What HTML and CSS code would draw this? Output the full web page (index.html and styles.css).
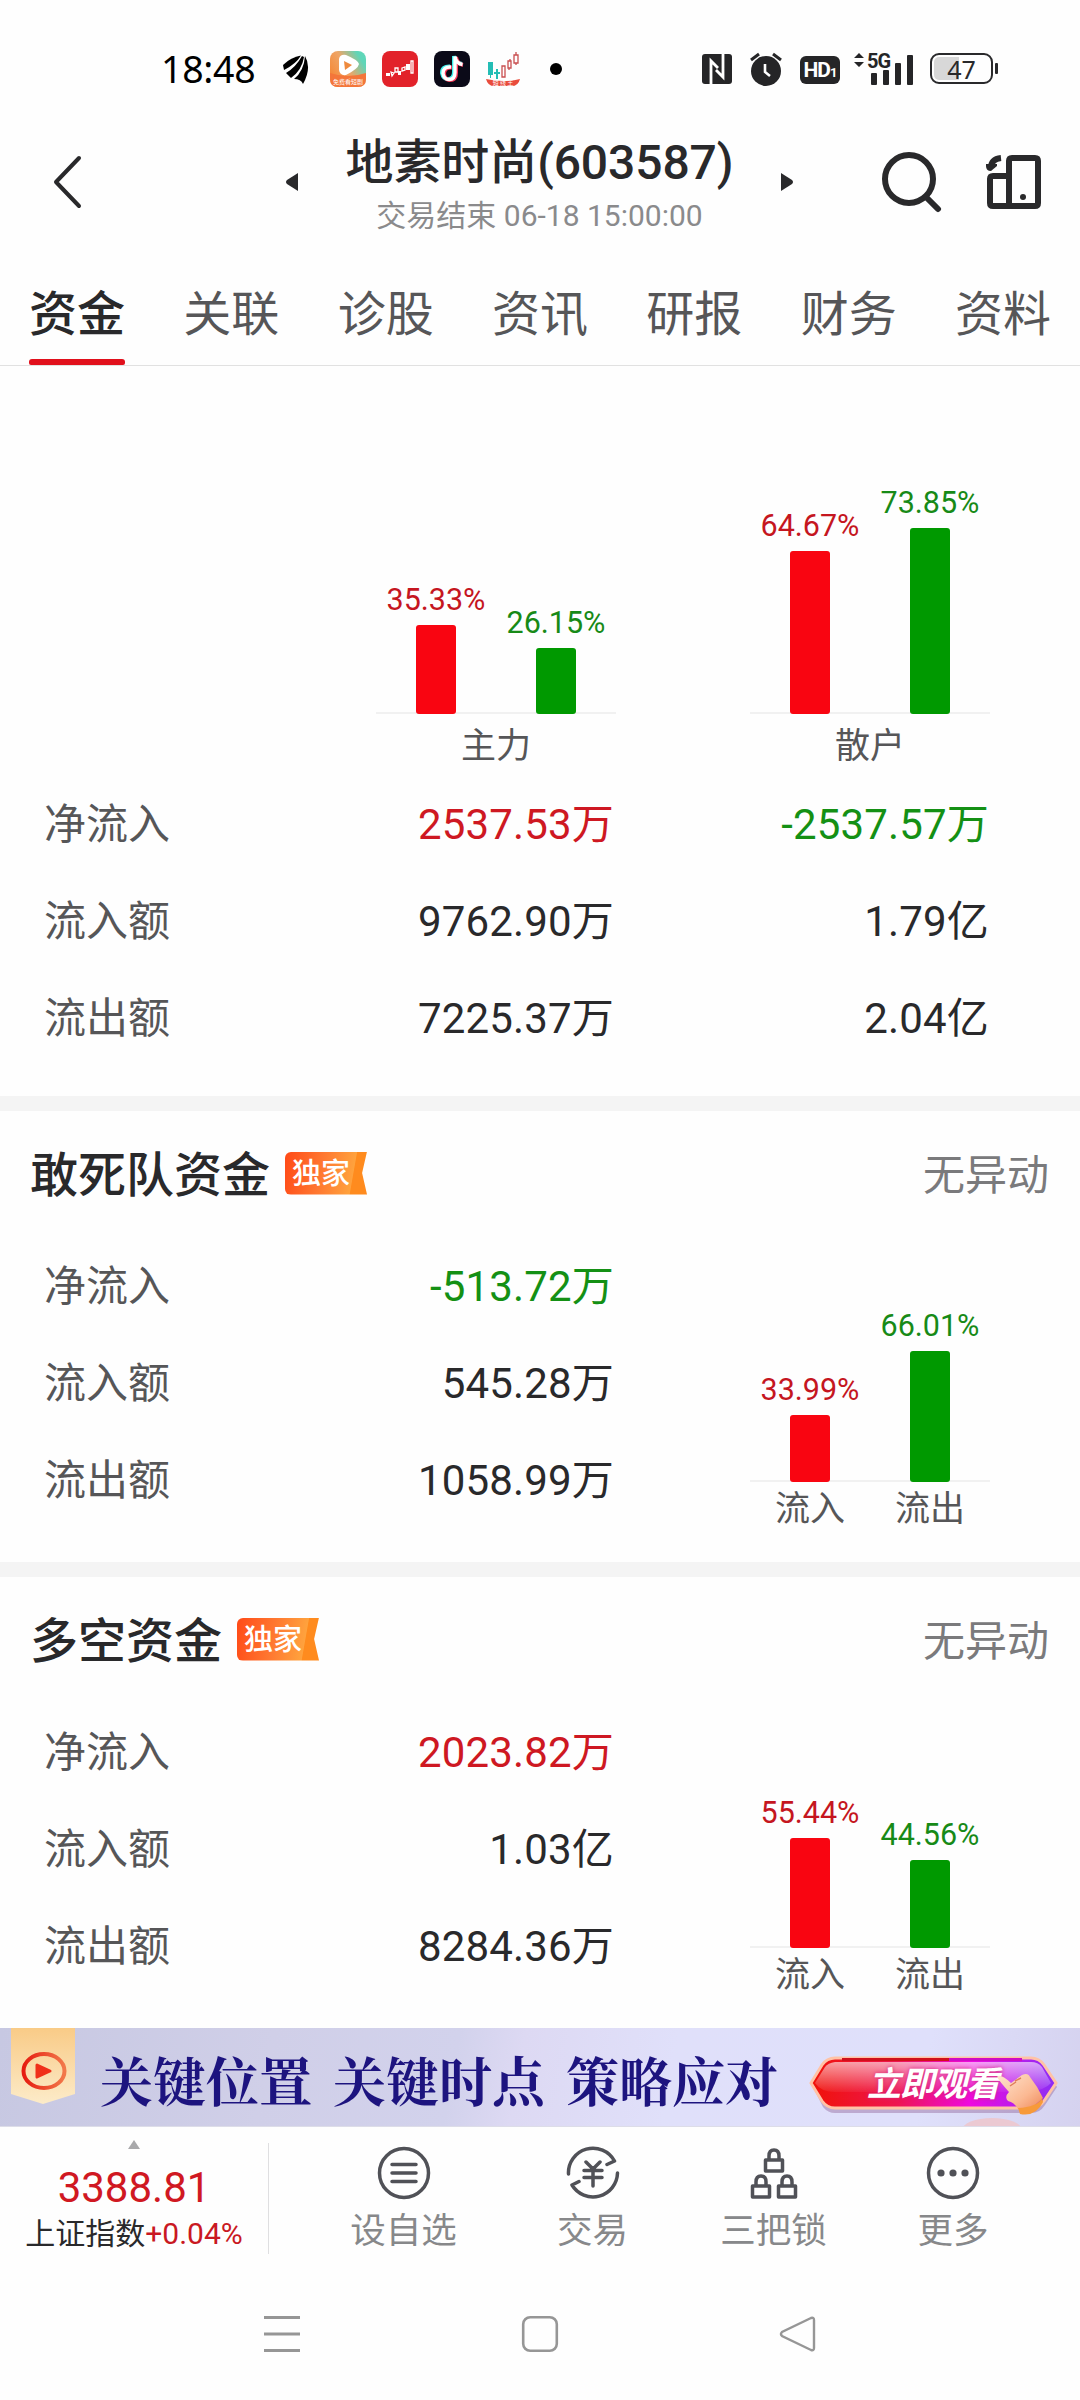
FILE: index.html
```html
<!DOCTYPE html>
<html lang="zh-CN">
<head>
<meta charset="utf-8">
<title>地素时尚(603587)</title>
<link rel="stylesheet" href="styles.css">
</head>
<body>
<div class="screen">
  <div class="status">
    <div class="status-left">
      <span class="clock">18:48</span>
      <svg class="ic-wing" width="28" height="32" viewBox="0 0 28 32"><path d="M1 12Q9 4 19 2.500Q14 11 2 17Z"/><path d="M4 20Q14 14 20 3L22 4Q20 17 9 25Z"/><path d="M12 26Q22 18 23 3Q30 15 21 31Q19 26 12 26Z"/></svg>
      <svg class="ic-app" width="36" height="36" viewBox="0 0 36 36"><defs><linearGradient id="play" x1="0" y1=".6" x2="1" y2="0"><stop offset="0" stop-color="#f58a3a"/><stop offset=".4" stop-color="#efa566"/><stop offset=".8" stop-color="#5fd6b8"/></linearGradient></defs><rect width="36" height="36" rx="8" fill="url(#play)"/><path d="M0 22Q18 28 36 22V28Q36 36 28 36H8Q0 36 0 28Z" fill="#f4763a"/><path d="M9 8Q10 3 16 4Q28 9 29 13Q28 18 16 24Q10 25 9 19Z" fill="#fff"/><path d="M14 10L22 14L15 19Z" fill="#ee8a3d"/><text x="18" y="33" class="tiny" text-anchor="middle">免费看短剧</text></svg>
      <svg class="ic-app" width="36" height="36" viewBox="0 0 36 36"><rect width="36" height="36" rx="8" fill="#e2222a"/><path d="M4 22h4v3H4zM16 20h3v4h-3zM24 13h4v6h-4z" fill="#fff"/><path d="M9 21l3 1-2 3zM13 17h3v4h-3zM20 17l3-1v3l-3 1zM29 10h2v12h-2z" fill="none" stroke="#fff" stroke-width="1.300"/></svg>
      <svg class="ic-app" width="36" height="36" viewBox="0 0 36 36"><rect width="36" height="36" rx="8" fill="#0b0a18"/><g fill="none" stroke-width="4"><path d="M16 15.500Q8 15 8 22Q9 28 14 28Q20 28 20 21V5Q21 12 28 13" stroke="#3ff0ee"/><path d="M18 16.500Q10 16 10 23Q11 29 16 29Q22 29 22 22V6Q23 13 29 14" stroke="#fb3b5b"/><path d="M17 16Q9 15.500 9 22.500Q10 28.500 15 28.500Q21 28.500 21 21.500V5.500Q22 12.500 28.500 13.500" stroke="#fff" stroke-width="3.400"/></g></svg>
      <svg class="ic-app" width="36" height="36" viewBox="0 0 36 36"><path d="M2 11h5v13H2zM10 18h2v10h-2zM8 21h6v2H8zM4 23h1v4H4z" fill="#24bdb5"/><path d="M16 15h3v11h-3zM22 10h3v7h-3zM28 4h4v8h-4zM30 1v3M24 8v2M30 12v2M23 17v2" fill="none" stroke="#c94f50" stroke-width="1.300"/><path d="M0 28Q18 32 34 28Q32 36 24 35H10Q2 36 0 28Z" fill="#e94c3c"/><text x="17" y="34" class="tiny" text-anchor="middle">短 线 王</text></svg>
      <i class="dot"></i>
    </div>
    <div class="status-right">
      <svg width="30" height="30" viewBox="0 0 30 30"><rect width="30" height="30" rx="3" fill="#252527"/><path d="M9 30V7L16 14M21 0V23L14 16" fill="none" stroke="#fff" stroke-width="2.800"/></svg>
      <svg width="32" height="34" viewBox="0 0 32 34"><circle cx="16" cy="19" r="15" fill="#252527"/><path d="M1 8L9 2M31 8L23 2" stroke="#252527" stroke-width="3"/><path d="M15 12V20L20 24" fill="none" stroke="#fff" stroke-width="2.600"/></svg>
      <span class="hd">HD<small>1</small></span>
      <svg class="signal" width="60" height="40" viewBox="0 -6 60 40"><path d="M0 6L5 1L10 6ZM0 10L5 15L10 10Z"/><text x="13" y="15.500" class="five">5G</text><rect x="17" y="21" width="6" height="12" rx="1"/><rect x="29" y="18" width="6" height="15" rx="1"/><rect x="41" y="11" width="6" height="22" rx="1"/><rect x="53" y="3" width="6" height="30" rx="1"/></svg>
      <span class="battery"><b>47</b></span><i class="nub"></i>
    </div>
  </div>

  <header class="header">
    <svg class="back" width="32" height="56" viewBox="0 0 32 56"><path d="M27 4L4 28L27 52" fill="none" stroke="#29292b" stroke-width="4" stroke-linecap="round" stroke-linejoin="round"/></svg>
    <svg class="prev" width="12" height="18" viewBox="0 0 12 18"><path d="M12 0V18L1 11Q-1 9 1 7Z" fill="#29292b"/></svg>
    <div class="titles"><h1>地素时尚(603587)</h1><p>交易结束 06-18 15:00:00</p></div>
    <svg class="next" width="12" height="18" viewBox="0 0 12 18"><path d="M0 0V18L11 11Q13 9 11 7Z" fill="#29292b"/></svg>
    <svg class="search" width="62" height="62" viewBox="0 0 62 62"><g fill="none" stroke="#29292b" stroke-width="6" stroke-linecap="round"><circle cx="28" cy="28" r="24"/><path d="M45 46L57 58"/></g></svg>
    <svg class="device" width="56" height="56" viewBox="0 0 56 56"><g fill="none" stroke="#29292b" stroke-width="6"><path d="M23 52V7Q23 4 26 4H49Q52 4 52 7V49Q52 52 49 52H7Q4 52 4 49V25Q4 22 7 22H22"/><path d="M5 14Q5 5 15 4"/></g><path d="M0 10H11V12L5 17Q0 17 0 12Z" fill="#29292b"/><circle cx="37" cy="43" r="3" fill="#29292b"/></svg>
  </header>

  <nav class="tabs"><a class="active">资金</a><a>关联</a><a>诊股</a><a>资讯</a><a>研报</a><a>财务</a><a>资料</a></nav>

  <section class="overview">
    <div class="charts">
      <div class="chart-col"><div class="plot">
        <div class="col red"><span>35.33%</span><i style="height:89px"></i></div>
        <div class="col green"><span>26.15%</span><i style="height:66px"></i></div></div><div class="names"><b>主力</b></div></div>
      <div class="chart-col"><div class="plot">
        <div class="col red"><span>64.67%</span><i style="height:163px"></i></div>
        <div class="col green"><span>73.85%</span><i style="height:186px"></i></div></div><div class="names"><b>散户</b></div></div>
    </div>
    <div class="row"><span>净流入</span><em class="up">2537.53万</em><em class="down">-2537.57万</em></div>
    <div class="row"><span>流入额</span><em>9762.90万</em><em>1.79亿</em></div>
    <div class="row"><span>流出额</span><em>7225.37万</em><em>2.04亿</em></div>
  </section>

  <section class="fund">
    <div class="fund-head"><h2>敢死队资金</h2><span class="badge">独家</span><span class="note">无异动</span></div>
    <div class="fund-body">
      <div class="rows">
        <div class="row"><span>净流入</span><em class="down">-513.72万</em></div>
        <div class="row"><span>流入额</span><em>545.28万</em></div>
        <div class="row"><span>流出额</span><em>1058.99万</em></div>
      </div>
      <div class="chart-col"><div class="plot">
        <div class="col red"><span>33.99%</span><i style="height:67px"></i></div>
        <div class="col green"><span>66.01%</span><i style="height:131px"></i></div></div><div class="names"><b>流入</b><b>流出</b></div></div>
    </div>
  </section>

  <section class="fund last">
    <div class="fund-head"><h2>多空资金</h2><span class="badge">独家</span><span class="note">无异动</span></div>
    <div class="fund-body">
      <div class="rows">
        <div class="row"><span>净流入</span><em class="up">2023.82万</em></div>
        <div class="row"><span>流入额</span><em>1.03亿</em></div>
        <div class="row"><span>流出额</span><em>8284.36万</em></div>
      </div>
      <div class="chart-col"><div class="plot">
        <div class="col red"><span>55.44%</span><i style="height:110px"></i></div>
        <div class="col green"><span>44.56%</span><i style="height:88px"></i></div></div><div class="names"><b>流入</b><b>流出</b></div></div>
    </div>
  </section>

  <div class="banner">
    <svg class="ribbon" width="64" height="76" viewBox="0 0 64 76"><defs><linearGradient id="rib" x1="0" y1="0" x2="0" y2="1"><stop offset="0" stop-color="#f9cb87"/><stop offset="1" stop-color="#fcebc9"/></linearGradient><linearGradient id="ring"><stop offset="0" stop-color="#e61c10"/><stop offset="1" stop-color="#f2784a"/></linearGradient></defs><path d="M0 0H64V66L32 76L0 66Z" fill="url(#rib)"/><ellipse cx="33" cy="43" rx="20.500" ry="17" fill="none" stroke="url(#ring)" stroke-width="4"/><path d="M26 37L39 43L26 49Z" fill="#f0301a" stroke="#f0301a" stroke-width="3" stroke-linejoin="round"/></svg>
    <div class="slogan"><span>关键位置</span><span>关键时点</span><span>策略应对</span></div>
    <div class="cta">
      <svg width="250" height="62" viewBox="0 0 250 62"><defs><linearGradient id="cta"><stop offset="0" stop-color="#f01208"/><stop offset=".35" stop-color="#ee1550"/><stop offset=".65" stop-color="#ee0ae0"/><stop offset="1" stop-color="#8b2df5"/></linearGradient><linearGradient id="gloss" x1="0" y1="0" x2="0" y2="1"><stop offset="0" stop-color="#fff" stop-opacity=".6"/><stop offset="1" stop-color="#fff" stop-opacity=".05"/></linearGradient></defs><path d="M4 31L14 13Q18 6 26 6H222Q230 6 236 13L248 31L236 49Q231 57 222 57H26Q19 57 14 51Z" fill="#8a5a90" opacity=".4"/><path d="M2 27L13 9Q18 2 26 2H222Q230 2 235 9L247 27L235 45Q230 52 222 52H26Q18 52 13 45Z" fill="url(#cta)" stroke="#ffc3a6" stroke-width="3"/><path d="M6 27L16 11Q19 7 26 6H222Q229 6 233 11L242 27Q236 34 220 36H26Q12 36 6 27Z" fill="url(#gloss)"/><path d="M33 3.500H140" stroke="#d0101c" stroke-width="3"/><path d="M140 3.500H213" stroke="#cf0cc4" stroke-width="3"/></svg>
      <b>立即观看</b>
      <svg class="hand" width="50" height="46" viewBox="0 0 50 46"><defs><linearGradient id="skin" x1="0" y1="0" x2="1" y2="1"><stop offset="0" stop-color="#ffe6d2"/><stop offset=".6" stop-color="#fbb993"/><stop offset="1" stop-color="#ee8556"/></linearGradient></defs><path d="M1 4Q4 0 15 10L26 2Q32 -1 34 4Q42 14 47 25L32 38L22 36Q18 29 12 28Q8 24 13 19Q4 9 1 4Z" fill="url(#skin)"/><path d="M46 25Q41 34 22 35L24 41Q40 44 47 29Z" fill="#f79a3a"/><path d="M14 13L20 9M19 8l6-3" stroke="#df7e5c" stroke-width="1.500"/></svg>
    </div>
    <i class="peek"></i>
  </div>

  <footer class="dock">
    <div class="index"><svg width="12" height="9" viewBox="0 0 12 9"><path d="M6 0L12 9H0Z" fill="#a9a9ab"/></svg><strong>3388.81</strong><p>上证指数<em>+0.04%</em></p></div>
    <div class="actions">
      <a><svg width="54" height="54" viewBox="0 0 54 54"><g fill="none" stroke="#505157" stroke-width="3.500"><circle cx="27" cy="27" r="24.500"/><path d="M15 18.500H39M15 27H39M15 35.500H39" stroke-linecap="round"/></g></svg><span>设自选</span></a>
      <a><svg width="54" height="54" viewBox="0 0 54 54"><g fill="none" stroke="#505157" stroke-width="3.500" stroke-linecap="round" stroke-linejoin="round"><path d="M2.500 28A24.500 24.500 0 0 1 48.500 15L41 18.500M51.500 27A24.500 24.500 0 0 1 6 39L13 35.500M20 16L27 23L34 16M27 23V40M18 24.500H36M18 31.500H36"/></g></svg><span>交易</span></a>
      <a><svg width="54" height="54" viewBox="0 0 54 54"><g fill="none" stroke="#505157" stroke-width="3.500" stroke-linejoin="round"><rect x="18.500" y="14" width="17" height="11"/><path d="M22 14V10Q22 4 27 4Q32 4 32 10V14"/><rect x="5.500" y="40" width="17" height="11"/><path d="M9 40V36Q9 30 14 30Q19 30 19 36V40"/><rect x="31.500" y="40" width="17" height="11"/><path d="M35 40V36Q35 30 40 30Q45 30 45 36V40"/></g></svg><span>三把锁</span></a>
      <a><svg width="54" height="54" viewBox="0 0 54 54"><circle cx="27" cy="27" r="24.500" fill="none" stroke="#505157" stroke-width="3.500"/><g fill="#505157"><circle cx="15" cy="27" r="3.600"/><circle cx="27" cy="27" r="3.600"/><circle cx="39" cy="27" r="3.600"/></g></svg><span>更多</span></a>
    </div>
  </footer>

  <div class="sysnav">
    <svg width="38" height="38" viewBox="0 0 38 38"><path d="M1 2.500H37M1 19H37M1 35.500H37" stroke="#969696" stroke-width="3"/></svg>
    <svg width="38" height="38" viewBox="0 0 38 38"><rect x="2.200" y="2.200" width="33.600" height="33.600" rx="7" fill="none" stroke="#969696" stroke-width="2.600"/></svg>
    <svg width="38" height="38" viewBox="0 0 38 38"><path d="M32 3L3 17Q1 19 3 21L32 35Q35 36 35 33V5Q35 2 32 3Z" fill="none" stroke="#969696" stroke-width="2.400"/></svg>
  </div>
</div>
</body>
</html>
```
FILE: styles.css
```css
* { box-sizing: border-box; margin: 0; padding: 0; }
body { width: 1080px; height: 2400px; background: #fefefe; color: #29292b; font-family: Roboto, "Noto Sans CJK SC", sans-serif; overflow: hidden; }
svg { display: block; flex: none; }
em, i { font-style: normal; }
.screen { width: 1080px; height: 2400px; display: flex; flex-direction: column; }

.status { height: 136px; padding: 1px 82px 0 161px; display: flex; justify-content: space-between; align-items: center; }
.status-left, .status-right { display: flex; align-items: center; }
.clock { font: 37.500px/40px "Noto Sans", sans-serif; color: #000; width: 95px; letter-spacing: -.3px; }
.ic-wing { margin-left: 26px; margin-right: 0; }
.ic-app { margin-left: 16px; }
.ic-wing + .ic-app { margin-left: 20px; }
.tiny { font: 6px "Noto Sans CJK SC", sans-serif; fill: #fff; }
.dot { width: 12px; height: 12px; border-radius: 50%; background: #000; margin-left: 28px; }
.status-right svg { margin-right: 18px; }
.hd { width: 40px; height: 28px; margin: 3px 14px 0 0; border-radius: 6px; background: #252527; color: #fff; font: 700 21px/29px Roboto, sans-serif; text-align: center; letter-spacing: -1px; }
.hd small { font-size: 13px; }
.status-right .signal { margin: -6px 16px 0 0; fill: #252527; }
.five { font: 700 20px Roboto, sans-serif; letter-spacing: -1px; }
.battery { width: 63px; height: 31px; border: 2.500px solid #29292b; border-radius: 9px; display: flex; align-items: center; justify-content: center; background: linear-gradient(90deg, #d8d8d8 25px, transparent 25px) content-box; padding: 2px; }
.battery b { font: 25px/26px "Noto Sans", sans-serif; }
.nub { width: 3px; height: 11px; background: #29292b; border-radius: 1px; margin-left: 2px; }

.header { height: 132px; padding: 0 37px 0 52px; display: flex; align-items: center; }
.header > svg { margin-bottom: 40px; }
.prev { margin-left: 202px; }
.titles { width: 483px; height: 132px; text-align: center; }
.titles h1 { font-size: 48px; font-weight: 500; line-height: 56px; margin-top: -1px; letter-spacing: -.1px; white-space: nowrap; }
.titles p { font-size: 30px; line-height: 36px; color: #8a8a8c; margin-top: 7px; }
.search { margin-left: 88px; }
.device { margin-left: 43px; }

.tabs { height: 98px; padding: 0 29px; display: flex; justify-content: space-between; border-bottom: 1px solid #e1e1e1; }
.tabs a { width: 96px; height: 97px; padding-top: 12px; font-size: 48px; line-height: 70px; color: #565658; }
.tabs .active { color: #29292b; font-weight: 500; position: relative; }
.active::after { content: ""; position: absolute; left: 0; bottom: 0; width: 96px; height: 6px; border-radius: 3px 3px 2px 2px; background: #e1101c; }

.overview { height: 745px; padding-top: 148px; border-bottom: 15px solid #f4f4f4; }
.charts { display: flex; gap: 134px; margin-left: 376px; height: 262px; }
.chart-col { width: 240px; }
.plot { height: 200px; display: flex; justify-content: space-around; align-items: flex-end; background: linear-gradient(#f1f1f1, #f1f1f1) 0 100% / 100% 2px no-repeat; }
.col { width: 120px; display: flex; flex-direction: column; align-items: center; }
.col span { font-size: 30.500px; line-height: 36px; margin-bottom: 7px; }
.col i { width: 40px; border-radius: 3px; }
.red { color: #c5161f; } .red i { background: #f90511; }
.green { color: #178a17; } .green i { background: #009900; }
.names { display: flex; justify-content: space-around; font-size: 35px; line-height: 48px; padding-top: 4px; color: #565658; }
.names b { font-weight: 400; }
.overview .names { padding-top: 9px; }
.row { display: grid; grid-template-columns: 245px 325px 375px; height: 97px; margin-left: 44px; padding-top: 1px; align-items: center; font-size: 42px; line-height: 60px; }
.row span { color: #565658; }
.row em { text-align: right; letter-spacing: .15px; }
.row .up { color: #ce1822; } .row .down { color: #149014; }

.fund { height: 466px; border-bottom: 15px solid #f4f4f4; }
.last { height: 451px; border: 0; }
.fund-head { height: 127px; padding: 3px 31px 0 30px; display: flex; align-items: center; }
.fund-head h2 { font-size: 48px; font-weight: 500; line-height: 70px; }
.badge { width: 82px; height: 43px; margin: -6px 0 0 15px; padding-left: 7px; font-size: 29px; line-height: 45px; font-weight: 500; color: #fff; background: linear-gradient(100deg, #ff4a17, #ff7931 45%, #ffa23d 80%, #ff8b1e 81%); border-radius: 6px 0 0 6px; clip-path: polygon(0 0, 100% 0, 94% 50%, 100% 100%, 0 100%); }
.note { margin-left: auto; font-size: 42px; line-height: 60px; color: #7a7a7c; }
.fund-body { display: flex; height: 320px; }
.rows { width: 750px; }
.rows .row { grid-template-columns: 245px 325px; }
.fund-body .plot { height: 244px; }

.banner { position: relative; height: 99px; border-bottom: 1px solid #dddde8; background: linear-gradient(100deg, #c7c8e2, #d0cfe8 25%, #d2d2ec 42%, #ddd9f3 48%, #e0e0fa 62%, #dfe0fb 85%, #d5d2ef); display: flex; padding-left: 11px; overflow: hidden; }
.slogan { display: flex; gap: 21px; margin: 15px 0 0 25px; font: 700 53px/72px "Noto Serif CJK SC", "Noto Sans CJK SC", serif; color: #1d147f; }
.cta { position: relative; width: 250px; height: 62px; margin: 28px 0 0 31px; }
.cta b { position: absolute; left: 58px; top: 1px; font: italic 700 34px/50px "Noto Sans CJK SC", sans-serif; color: #fff; letter-spacing: -1px; text-shadow: 0 0 4px #d82478; }
.hand { position: absolute; left: 187px; top: 17px; }
.peek { position: absolute; left: 962px; top: 90px; width: 60px; height: 24px; border-radius: 50%; background: #ebc9d2; }

.dock { height: 134px; display: flex; align-items: center; }
.index { width: 269px; height: 111px; margin-top: 8px; border-right: 1px solid #dfdfe1; display: flex; flex-direction: column; align-items: center; }
.index svg { margin-top: -3px; }
.index strong { font-size: 42px; line-height: 50px; font-weight: 400; color: #d01822; margin-top: 14px; }
.index p { font-size: 30px; line-height: 36px; white-space: nowrap; margin-top: 3px; }
.index em { color: #c91822; }
.actions { display: grid; grid-template-columns: 189px 189px 173px 186px; margin: 14px 0 0 40px; }
.actions a { display: flex; flex-direction: column; align-items: center; }
.actions span { font-size: 35.500px; line-height: 50px; color: #87888a; margin-top: 6px; }
.sysnav { height: 139px; padding: 54px 263px 0; display: flex; justify-content: space-between; }
```
